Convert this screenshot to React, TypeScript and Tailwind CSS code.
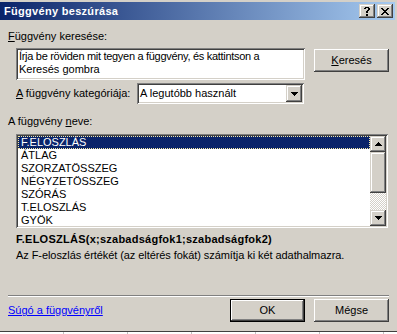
import React from "react";

const raised =
  "shadow-[inset_-1px_-1px_#404040,inset_1px_1px_#ffffff,inset_-2px_-2px_#808080,inset_2px_2px_#d4d0c8]";
const captionRaised =
  "shadow-[inset_-1px_-1px_#404040,inset_1px_1px_#d4d0c8,inset_-2px_-2px_#808080,inset_2px_2px_#ffffff]";
const sunken =
  "shadow-[inset_1px_1px_#808080,inset_-1px_-1px_#ffffff,inset_2px_2px_#404040,inset_-2px_-2px_#d4d0c8]";

function Pix({ rows, color = "#000" }: { rows: string[]; color?: string }) {
  const w = rows[0].length;
  const h = rows.length;
  const rects: React.ReactNode[] = [];
  rows.forEach((r, y) =>
    r.split("").forEach((c, x) => {
      if (c === "x") rects.push(<rect key={x + "-" + y} x={x} y={y} width={1} height={1} fill={color} />);
    })
  );
  return (
    <svg width={w} height={h} viewBox={`0 0 ${w} ${h}`} shapeRendering="crispEdges">
      {rects}
    </svg>
  );
}

const X_GLYPH = ["xx....xx", ".xx..xx.", "..xxxx..", "...xx...", "..xxxx..", ".xx..xx.", "xx....xx"];
const Q_GLYPH = [".xxxx.", "xx..xx", "....xx", "...xx.", "..xx..", "..xx..", "......", "..xx..", "..xx.."];
const DOWN = ["xxxxxxx", ".xxxxx.", "..xxx..", "...x..."];
const UP = ["...x...", "..xxx..", ".xxxxx.", "xxxxxxx"];

const items = ["F.ELOSZLÁS", "ÁTLAG", "SZORZATÖSSZEG", "NÉGYZETÖSSZEG", "SZÓRÁS", "T.ELOSZLÁS", "GYÖK"];

export default function App() {
  return (
    <div className="w-[397px] h-[334px] overflow-hidden bg-white relative font-['Liberation_Sans',Arial,sans-serif] text-[11px] text-black">
      <div className="w-[397px] h-[332px] bg-[#d4d0c8] border-b border-[#404040] pt-[2px] flex flex-col">
        {/* title bar */}
        <div className="w-[395px] h-[18px] bg-[linear-gradient(to_right,#0a246a,#a6caf0)] flex items-center pl-[4px] pr-[2px]">
          <span className="text-white font-bold text-[11px] leading-[13px] tracking-[0.3px] flex-1">Függvény beszúrása</span>
          <div className={`w-[16px] h-[14px] bg-[#d4d0c8] ${captionRaised} flex items-center justify-center`}>
            <Pix rows={Q_GLYPH} />
          </div>
          <div className={`w-[16px] h-[14px] ml-[2px] bg-[#d4d0c8] ${captionRaised} flex items-center justify-center`}>
            <Pix rows={X_GLYPH} />
          </div>
        </div>

        <div className="flex flex-col pl-[8px]">
          <div className="mt-[10px] h-[13px] leading-[13px]">
            <span className="underline">F</span>üggvény keresése:
          </div>

          <div className="mt-[5px] flex">
            <div className={`ml-[8px] w-[289px] h-[32px] bg-white ${sunken} pl-[3px] pt-[2px] leading-[13px] whitespace-nowrap`}>
              <div className="tracking-[-0.3px]">Írja be röviden mit tegyen a függvény, és kattintson a</div>
              <div>Keresés gombra</div>
            </div>
            <div className={`ml-[9px] mt-[1px] w-[75px] h-[23px] ${raised} flex items-center justify-center`}>
              <span>
                <span className="underline">K</span>eresés
              </span>
            </div>
          </div>

          <div className="mt-[3px] flex items-center">
            <div className="ml-[8px] w-[121px] leading-[13px]">
              <span className="underline">A</span> függvény kategóriája:
            </div>
            <div className={`w-[167px] h-[21px] bg-white ${sunken} flex items-center pl-[3px] pr-[2px]`}>
              <span className="flex-1">A legutóbb használt</span>
              <div className={`w-[16px] h-[17px] bg-[#d4d0c8] ${captionRaised} flex items-center justify-center`}>
                <Pix rows={DOWN} />
              </div>
            </div>
          </div>

          <div className="mt-[11px] h-[13px] leading-[13px]">
            A függvény <span className="underline">n</span>eve:
          </div>

          <div className={`mt-[6px] ml-[8px] w-[372px] h-[94px] bg-white ${sunken} p-[2px] flex`}>
            <div className="flex-1 flex flex-col overflow-hidden">
              {items.map((it, i) => (
                <div
                  key={it}
                  className={
                    i === 0
                      ? "h-[13px] leading-[11px] bg-[#0a246a] text-white pl-[2px] border border-dotted border-[#f5e9a6]"
                      : "h-[13px] leading-[13px] pl-[3px]"
                  }
                >
                  {it}
                </div>
              ))}
            </div>
            <div className="w-[16px] flex flex-col">
              <div className={`h-[16px] bg-[#d4d0c8] ${captionRaised} flex items-center justify-center`}>
                <Pix rows={UP} />
              </div>
              <div className={`h-[41px] bg-[#d4d0c8] ${captionRaised}`} />
              <div className="flex-1 bg-[repeating-conic-gradient(#ffffff_0_25%,#d4d0c8_0_50%)] bg-[length:2px_2px]" />
              <div className={`h-[16px] bg-[#d4d0c8] ${captionRaised} flex items-center justify-center`}>
                <Pix rows={DOWN} />
              </div>
            </div>
          </div>

          <div className="mt-[5px] ml-[8px] h-[13px] leading-[13px] font-bold tracking-[0.25px]">
            F.ELOSZLÁS(x;szabadságfok1;szabadságfok2)
          </div>
          <div className="mt-[3px] ml-[8px] h-[13px] leading-[13px] tracking-[-0.07px]">
            Az F-eloszlás értékét (az eltérés fokát) számítja ki két adathalmazra.
          </div>

          <div className="mt-[33px] w-[381px] h-[2px] border-t border-[#808080] border-b border-b-white" />

          <div className="mt-[2px] flex h-[23px]">
            <div className="w-[222px] flex items-center">
              <span className="text-[#0000ff] underline">Súgó a függvényről</span>
            </div>
            <div className="w-[75px] h-[23px] border border-black">
              <div className={`w-full h-full ${raised} flex items-center justify-center`}>OK</div>
            </div>
            <div className={`ml-[9px] w-[75px] h-[23px] ${raised} flex items-center justify-center`}>Mégse</div>
          </div>
        </div>
      </div>
      <div className="h-[2px] flex">
        {[21, 85, 149, 213, 277, 341].map((x, i) => (
          <div key={x} className={`h-[2px] w-[64px] border-r border-[#c0c0c0] ${i === 0 ? "w-[21px]" : ""}`} />
        ))}
      </div>
    </div>
  );
}
